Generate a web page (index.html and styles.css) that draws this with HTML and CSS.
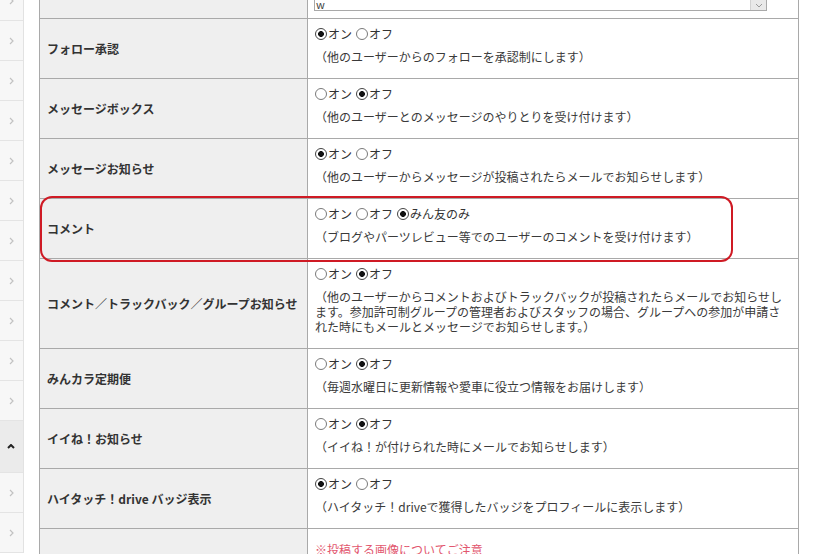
FILE: index.html
```html
<!DOCTYPE html>
<html lang="ja">
<head>
    <meta charset="UTF-8">
    <title>設定</title>
    <link rel="stylesheet" href="styles.css">
</head>
<body>
    <div class="page">
        <ul class="side">
            <li><svg viewBox="0 0 5 8"><polyline points="1,1 4,4 1,7"/></svg></li>
            <li><svg viewBox="0 0 5 8"><polyline points="1,1 4,4 1,7"/></svg></li>
            <li><svg viewBox="0 0 5 8"><polyline points="1,1 4,4 1,7"/></svg></li>
            <li><svg viewBox="0 0 5 8"><polyline points="1,1 4,4 1,7"/></svg></li>
            <li><svg viewBox="0 0 5 8"><polyline points="1,1 4,4 1,7"/></svg></li>
            <li><svg viewBox="0 0 5 8"><polyline points="1,1 4,4 1,7"/></svg></li>
            <li><svg viewBox="0 0 5 8"><polyline points="1,1 4,4 1,7"/></svg></li>
            <li><svg viewBox="0 0 5 8"><polyline points="1,1 4,4 1,7"/></svg></li>
            <li><svg viewBox="0 0 5 8"><polyline points="1,1 4,4 1,7"/></svg></li>
            <li><svg viewBox="0 0 5 8"><polyline points="1,1 4,4 1,7"/></svg></li>
            <li><svg viewBox="0 0 5 8"><polyline points="1,1 4,4 1,7"/></svg></li>
            <li class="active"><svg class="up" viewBox="0 0 8 5"><polyline points="1,4 4,1 7,4"/></svg></li>
            <li><svg viewBox="0 0 5 8"><polyline points="1,1 4,4 1,7"/></svg></li>
            <li><svg viewBox="0 0 5 8"><polyline points="1,1 4,4 1,7"/></svg></li>
        </ul>

        <div class="main">
            <table class="settings">
                <tr class="top-row">
                    <th></th>
                    <td>
                        <div class="select">
                            <span>w</span>
                            <i><svg viewBox="0 0 8 5"><polyline points="1,1 4,4 7,1"/></svg></i>
                        </div>
                    </td>
                </tr>
                <tr>
                    <th>フォロー承認</th>
                    <td>
                        <div class="opts">
                            <label><span class="radio on"></span>オン</label>
                            <label><span class="radio"></span>オフ</label>
                        </div>
                        <p class="desc">（他のユーザーからのフォローを承認制にします）</p>
                    </td>
                </tr>
                <tr>
                    <th>メッセージボックス</th>
                    <td>
                        <div class="opts">
                            <label><span class="radio"></span>オン</label>
                            <label><span class="radio on"></span>オフ</label>
                        </div>
                        <p class="desc">（他のユーザーとのメッセージのやりとりを受け付けます）</p>
                    </td>
                </tr>
                <tr>
                    <th>メッセージお知らせ</th>
                    <td>
                        <div class="opts">
                            <label><span class="radio on"></span>オン</label>
                            <label><span class="radio"></span>オフ</label>
                        </div>
                        <p class="desc">（他のユーザーからメッセージが投稿されたらメールでお知らせします）</p>
                    </td>
                </tr>
                <tr>
                    <th>コメント</th>
                    <td>
                        <div class="opts">
                            <label><span class="radio"></span>オン</label>
                            <label><span class="radio"></span>オフ</label>
                            <label><span class="radio on"></span>みん友のみ</label>
                        </div>
                        <p class="desc">（ブログやパーツレビュー等でのユーザーのコメントを受け付けます）</p>
                    </td>
                </tr>
                <tr>
                    <th>コメント／トラックバック／グループお知らせ</th>
                    <td>
                        <div class="opts">
                            <label><span class="radio"></span>オン</label>
                            <label><span class="radio on"></span>オフ</label>
                        </div>
                        <p class="desc">（他のユーザーからコメントおよびトラックバックが投稿されたらメールでお知らせします。参加許可制グループの管理者およびスタッフの場合、グループへの参加が申請された時にもメールとメッセージでお知らせします。）</p>
                    </td>
                </tr>
                <tr>
                    <th>みんカラ定期便</th>
                    <td>
                        <div class="opts">
                            <label><span class="radio"></span>オン</label>
                            <label><span class="radio on"></span>オフ</label>
                        </div>
                        <p class="desc">（毎週水曜日に更新情報や愛車に役立つ情報をお届けします）</p>
                    </td>
                </tr>
                <tr>
                    <th>イイね！お知らせ</th>
                    <td>
                        <div class="opts">
                            <label><span class="radio"></span>オン</label>
                            <label><span class="radio on"></span>オフ</label>
                        </div>
                        <p class="desc">（イイね！が付けられた時にメールでお知らせします）</p>
                    </td>
                </tr>
                <tr>
                    <th>ハイタッチ！drive バッジ表示</th>
                    <td>
                        <div class="opts">
                            <label><span class="radio on"></span>オン</label>
                            <label><span class="radio"></span>オフ</label>
                        </div>
                        <p class="desc">（ハイタッチ！driveで獲得したバッジをプロフィールに表示します）</p>
                    </td>
                </tr>
                <tr>
                    <th></th>
                    <td>
                        <p class="note">※投稿する画像についてご注意</p>
                        <p class="desc">&nbsp;</p>
                    </td>
                </tr>
            </table>
            <div class="mark"></div>
        </div>
    </div>
</body>
</html>
```

FILE: styles.css
```css
*{
    margin: 0;
    padding: 0;
    box-sizing: border-box;
}
body{
    background: #fff;
    font-family: "Noto Sans CJK JP", "Noto Sans", sans-serif;
    font-size: 12px;
    color: #333;
    overflow: hidden;
}
.page{
    display: flex;
    align-items: flex-start;
    height: 554px;
}

/* side menu */
.side{
    list-style: none;
    width: 24px;
    flex-shrink: 0;
    margin-top: -19px;
    background: #f7f7f7;
    border-right: 1px solid #e2e2e2;
}
.side li{
    height: 40px;
    border-bottom: 1px solid #e4e4e4;
    display: flex;
    align-items: center;
    justify-content: center;
    padding-right: 1px;
}
.side li svg{
    width: 5px;
    height: 8px;
    fill: none;
    stroke: #c2c2c2;
    stroke-width: 1.2;
}
.side li.active{
    height: 52px;
    background: #ebebeb;
}
.side li svg.up{
    width: 8px;
    height: 5px;
    stroke: #222;
    stroke-width: 2;
}

/* table */
.main{
    position: relative;
    margin-left: 15px;
    width: 760px;
}
.settings{
    width: 760px;
    border-collapse: collapse;
    margin-top: -17px;
}
.settings th,
.settings td{
    border: 1px solid #a9a9a9;
}
.settings th{
    width: 268px;
    background: #efefef;
    text-align: left;
    font-weight: bold;
    padding: 0 7px;
    vertical-align: middle;
    color: #333;
}
.settings td{
    padding: 5px 7px 14px;
    vertical-align: top;
}
.top-row td{
    padding: 5px 31px 7px 6px;
}

.select{
    height: 22px;
    border: 1px solid #a9a9a9;
    background: #fff;
    display: flex;
    align-items: flex-end;
    justify-content: space-between;
    font-size: 11px;
    line-height: 12px;
}
.select span{
    padding-left: 1px;
    color: #444;
}
.select i{
    width: 16px;
    height: 100%;
    background: #e9e9e9;
    border-left: 1px solid #d2d2d2;
    display: flex;
    align-items: flex-end;
    justify-content: center;
    padding-bottom: 2px;
}
.select i svg{
    width: 8px;
    height: 5px;
    fill: none;
    stroke: #9a9a9a;
    stroke-width: 1;
}

.opts{
    height: 20px;
    line-height: 20px;
    display: flex;
    align-items: center;
}
.opts label{
    display: flex;
    align-items: center;
    margin-right: 4px;
}
.radio{
    width: 12px;
    height: 12px;
    border: 1px solid #7a7a7a;
    border-radius: 50%;
    background: #fff;
    margin-right: 1px;
}
.radio.on{
    border-color: #444;
    background: radial-gradient(circle, #111 0 2.6px, #fff 3.2px);
}
.desc{
    margin-top: 5px;
    line-height: 15px;
    color: #3a3a3a;
}
.note{
    margin-top: 8px;
    line-height: 15px;
    color: #e2566e;
}

/* annotation */
.mark{
    position: absolute;
    left: 1px;
    top: 196px;
    width: 693px;
    height: 66px;
    border: 2px solid #cf1a24;
    border-radius: 12px;
}
```
